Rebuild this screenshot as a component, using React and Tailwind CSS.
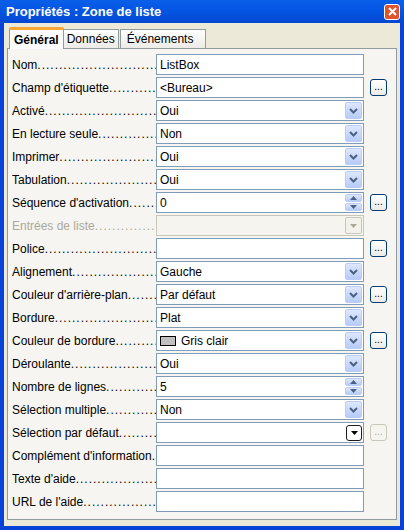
const rows = [
  { label: 'Nom', type: 'text', value: 'ListBox' },
  { label: "Champ d'étiquette", type: 'text', value: '<Bureau>', btn: true },
  { label: 'Activé', type: 'select', value: 'Oui' },
  { label: 'En lecture seule', type: 'select', value: 'Non' },
  { label: 'Imprimer', type: 'select', value: 'Oui' },
  { label: 'Tabulation', type: 'select', value: 'Oui' },
  { label: "Séquence d'activation", type: 'spin', value: '0', btn: true },
  { label: 'Entrées de liste', type: 'disabled' },
  { label: 'Police', type: 'text', value: '', btn: true },
  { label: 'Alignement', type: 'select', value: 'Gauche' },
  { label: "Couleur d'arrière-plan", type: 'select', value: 'Par défaut', btn: true },
  { label: 'Bordure', type: 'select', value: 'Plat' },
  { label: 'Couleur de bordure', type: 'select', value: 'Gris clair', swatch: true, btn: true },
  { label: 'Déroulante', type: 'select', value: 'Oui' },
  { label: 'Nombre de lignes', type: 'spin', value: '5' },
  { label: 'Sélection multiple', type: 'select', value: 'Non' },
  { label: 'Sélection par défaut', type: 'black', value: '', btn: 'disabled' },
  { label: "Complément d'information", type: 'text', value: '' },
  { label: "Texte d'aide", type: 'text', value: '' },
  { label: "URL de l'aide", type: 'text', value: '' },
]

const dots = '.'.repeat(60)

const XpArrowBtn = () => (
  <div className="w-[17px] h-[17px] shrink-0 rounded-[2px] border border-[#b9cdf6] bg-gradient-to-b from-[#dde8fe] to-[#b7cbf7] flex items-center justify-center">
    <svg width="9" height="6" viewBox="0 0 9 6">
      <path d="M1 1 L4.5 4.5 L8 1" stroke="#4d6185" strokeWidth="2" fill="none" />
    </svg>
  </div>
)

const SpinBtns = () => (
  <div className="w-[17px] h-[17px] shrink-0 flex flex-col gap-px">
    {[0, 1].map((i) => (
      <div key={i} className="flex-1 rounded-[2px] border border-[#b9cdf6] bg-gradient-to-b from-[#dde8fe] to-[#b7cbf7] flex items-center justify-center">
        <svg width="7" height="4" viewBox="0 0 7 4">
          <path d={i === 0 ? 'M0 4 L3.5 0 L7 4Z' : 'M0 0 L3.5 4 L7 0Z'} fill="#4d6185" />
        </svg>
      </div>
    ))}
  </div>
)

const Field = ({ row }) => {
  const disabled = row.type === 'disabled'
  return (
    <div className={`w-[208px] h-[21px] border flex items-center pl-[3px] pr-px ${disabled ? 'bg-[#f5f4ef] border-[#c9c7ba]' : 'bg-white border-[#7f9db9]'}`}>
      {row.swatch && <div className="w-[16px] h-[10px] shrink-0 bg-[#c0c0c0] border border-black mr-[5px]" />}
      <span className="flex-1 whitespace-nowrap leading-none">{row.value}</span>
      {row.type === 'select' && <XpArrowBtn />}
      {row.type === 'spin' && <SpinBtns />}
      {disabled && (
        <div className="w-[17px] h-[17px] rounded-[2px] border border-[#c9c7ba] bg-[#f2f1ea] flex items-center justify-center">
          <svg width="7" height="4" viewBox="0 0 7 4"><path d="M0 0 L3.5 4 L7 0Z" fill="#aca899" /></svg>
        </div>
      )}
      {row.type === 'black' && (
        <div className="w-[16px] h-[16px] rounded-[3px] border border-[#1c1c1c] bg-white flex items-center justify-center">
          <svg width="7" height="4" viewBox="0 0 7 4"><path d="M0 0 L3.5 4 L7 0Z" fill="#000" /></svg>
        </div>
      )}
    </div>
  )
}

const DotsBtn = ({ disabled }) => (
  <div className={`w-[17px] h-[17px] rounded-[3px] border flex items-end justify-center pb-[3px] text-[10px] leading-none ${disabled ? 'border-[#cbc8bb] text-[#aca899] bg-[#f5f4ef]' : 'border-[#003c74] bg-gradient-to-b from-white to-[#ecebe6] text-black'}`}>
    ...
  </div>
)

export default function App() {
  return (
    <div className="w-[404px] h-[530px] bg-[#0842d8] flex flex-col text-[12px] text-black" style={{ fontFamily: '"Liberation Sans", sans-serif' }}>
      <div className="h-[23px] bg-gradient-to-b from-[#0a5fe8] via-[#0454e2] to-[#0347d0] flex items-center justify-between pl-[6px] pr-[4px]">
        <span className="text-white font-bold text-[13px]">Propriétés : Zone de liste</span>
        <div className="w-[16px] h-[16px] rounded-[3px] border border-white bg-[#e0542d] flex items-center justify-center">
          <svg width="9" height="9" viewBox="0 0 9 9">
            <path d="M1 1 L8 8 M8 1 L1 8" stroke="white" strokeWidth="2" />
          </svg>
        </div>
      </div>
      <div className="flex-1 mx-[4px] mb-[4px] bg-[#ece9d8] px-[3px] pt-[3px] pb-[6px] flex flex-col">
        <div className="flex items-end h-[22px] pl-[2px]">
          <div className="h-[22px] px-[4px] bg-[#fcfcfe] border-x border-t border-[#919b9c] border-t-[3px] border-t-[#f9a836] rounded-t-[2px] font-bold text-[12px] flex items-center -mb-px relative z-10">Général</div>
          <div className="h-[19px] px-[3px] bg-gradient-to-b from-white to-[#ecebe6] border-t border-r border-[#919b9c] flex items-center">Données</div>
          <div className="h-[19px] px-[6px] ml-px bg-gradient-to-b from-white to-[#ecebe6] border-t border-x border-[#919b9c] flex items-center w-[86px]">Événements</div>
        </div>
        <div className="flex-1 border border-[#919b9c] bg-[#f6f5f1] pl-[4px] pt-[5px] flex flex-col gap-[2px]">
          {rows.map((row) => (
            <div key={row.label} className="flex items-center h-[21px]">
              <div className={`w-[144px] whitespace-nowrap overflow-hidden ${row.type === 'disabled' ? 'text-[#aca899]' : ''}`}>
                {row.label}
                <span className="tracking-[1px]">{dots}</span>
              </div>
              <Field row={row} />
              <div className="ml-[6px]">
                {row.btn && <DotsBtn disabled={row.btn === 'disabled'} />}
              </div>
            </div>
          ))}
        </div>
      </div>
    </div>
  )
}
